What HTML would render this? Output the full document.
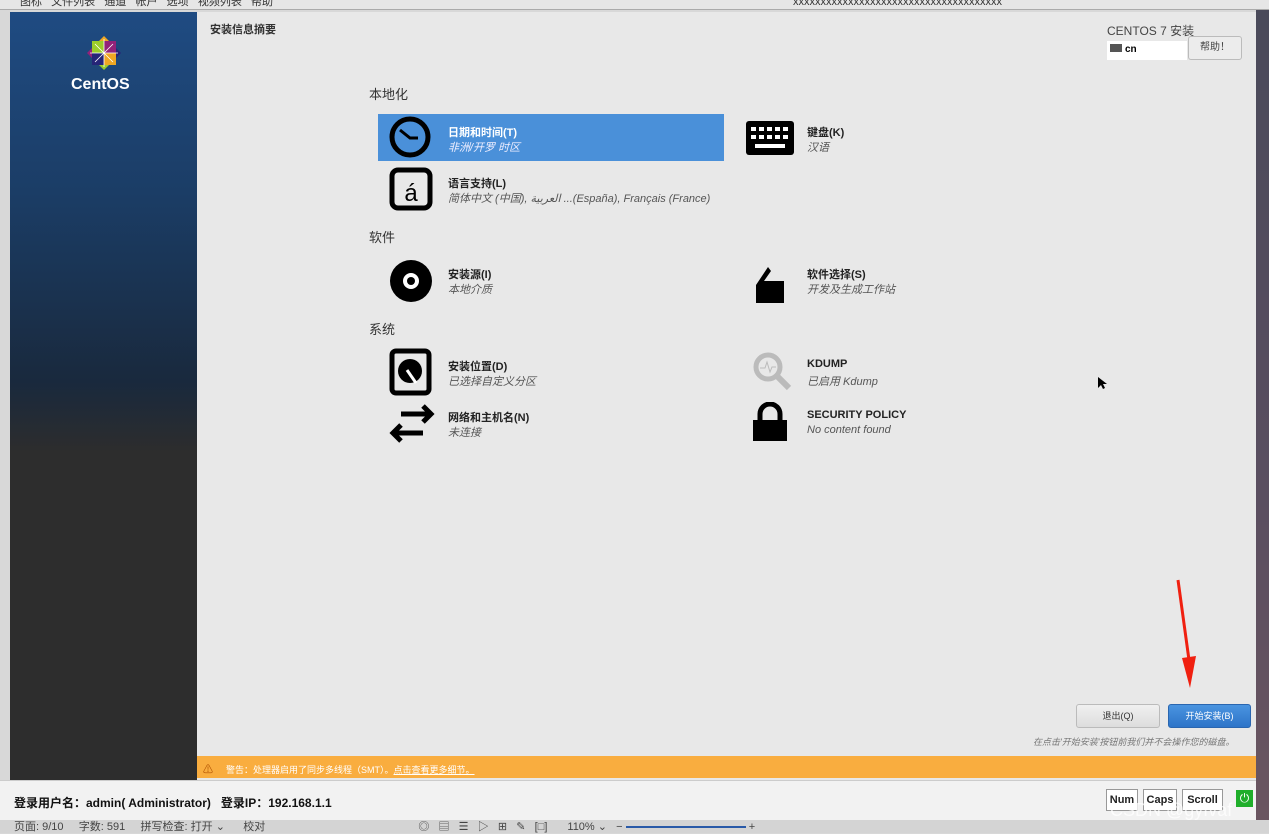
<!DOCTYPE html>
<html><head><meta charset="utf-8"><style>
*{margin:0;padding:0;box-sizing:border-box}
body{width:1269px;height:833px;overflow:hidden;background:#d8d8d8;font-family:"Liberation Sans","Noto Sans CJK SC",sans-serif;position:relative}
.a{position:absolute}
.t{font-size:11px;color:#222;font-weight:bold}
.s{font-size:11px;color:#555;font-style:italic}
.h{font-size:13px;color:#333}
</style></head><body>
<div class="a" style="left:0;top:0;width:1269px;height:10px;background:#e6e6e6;border-bottom:1px solid #aaa;overflow:hidden"><div style="font-size:11px;line-height:4px;color:#333;padding-left:20px;white-space:nowrap">图标 &nbsp; 文件列表 &nbsp; 通道 &nbsp; 帐户 &nbsp; 选项 &nbsp; 视频列表 &nbsp; 帮助<span style="margin-left:520px">xxxxxxxxxxxxxxxxxxxxxxxxxxxxxxxxxxxxxx</span></div></div>
<div class="a" style="left:1256px;top:10px;width:13px;height:810px;background:linear-gradient(#4a4a5a,#5a4e60 60%,#6a5560)"></div>
<div class="a" style="left:10px;top:12px;width:187px;height:768px;background:linear-gradient(#1f4b82 0,#1b3d66 180px,#19293d 370px,#2d2d2d 440px,#2d2d2d)"></div>
<svg class="a" style="left:87px;top:36px" width="34" height="34" viewBox="0 0 34 34">
<rect x="5" y="5" width="12" height="12" fill="#9ccd2a"/><rect x="17" y="5" width="12" height="12" fill="#932279"/>
<rect x="5" y="17" width="12" height="12" fill="#262577"/><rect x="17" y="17" width="12" height="12" fill="#efa724"/>
<path d="M17 0L22 5H12Z" fill="#efa724"/><path d="M17 34L12 29H22Z" fill="#9ccd2a"/><path d="M0 17L5 12V22Z" fill="#932279"/><path d="M34 17L29 22V12Z" fill="#262577"/>
<path d="M17 3V31M3 17H31M8 8L26 26M26 8L8 26" stroke="#fff" stroke-width="0.8"/></svg>
<div class="a" style="left:71px;top:76px;color:#fff;font-weight:bold;font-size:16px">CentOS</div>
<div class="a" style="left:197px;top:12px;width:1059px;height:768px;background:#e8e8e8"></div>
<div class="a" style="left:210px;top:21px;font-size:11px;font-weight:bold;color:#333">安装信息摘要</div>
<div class="a" style="left:1107px;top:22px;font-size:12px;color:#444">CENTOS 7 安装</div>
<div class="a" style="left:1107px;top:41px;width:80px;height:19px;background:#fff;font-size:10px;font-weight:bold;padding:3px 0 0 3px"><span style="display:inline-block;width:12px;height:8px;background:#555;margin-right:3px"></span>cn</div>
<div class="a" style="left:1188px;top:36px;width:54px;height:24px;background:#ececec;border:1px solid #bbb;border-radius:3px;font-size:10px;color:#444;text-align:center;line-height:22px">帮助！</div>
<div class="a h" style="left:369px;top:84px">本地化</div>
<div class="a" style="left:378px;top:114px;width:346px;height:47px;background:#4a90d9"></div>
<svg class="a" style="left:388px;top:115px" width="45" height="45"><circle cx="22" cy="22" r="18" fill="none" stroke="#000" stroke-width="5"/><path d="M12 15L22 23H30" stroke="#000" stroke-width="3" fill="none"/></svg>
<div class="a t" style="left:448px;top:124px;color:#fff">日期和时间(T)</div>
<div class="a s" style="left:448px;top:139px;color:#eef">非洲/开罗 时区</div>
<svg class="a" style="left:746px;top:121px" width="48" height="34"><rect width="48" height="34" rx="3" fill="#000"/><g fill="#fff"><rect x="5" y="6" width="5" height="4"/><rect x="13" y="6" width="5" height="4"/><rect x="21" y="6" width="5" height="4"/><rect x="29" y="6" width="5" height="4"/><rect x="37" y="6" width="5" height="4"/><rect x="5" y="14" width="5" height="4"/><rect x="13" y="14" width="5" height="4"/><rect x="21" y="14" width="5" height="4"/><rect x="29" y="14" width="5" height="4"/><rect x="37" y="14" width="5" height="4"/><rect x="9" y="23" width="30" height="4"/></g></svg>
<div class="a t" style="left:807px;top:124px">键盘(K)</div>
<div class="a s" style="left:807px;top:139px">汉语</div>
<svg class="a" style="left:389px;top:167px" width="44" height="44"><rect x="3" y="3" width="38" height="38" rx="6" fill="none" stroke="#000" stroke-width="5"/><text x="22" y="34" font-size="24" text-anchor="middle" font-family="Liberation Sans">á</text></svg>
<div class="a t" style="left:448px;top:175px">语言支持(L)</div>
<div class="a s" style="left:448px;top:190px">简体中文 (中国), العربية ...(España), Français (France)</div>
<div class="a h" style="left:369px;top:227px">软件</div>
<svg class="a" style="left:389px;top:259px" width="44" height="44"><circle cx="22" cy="22" r="21" fill="#000"/><circle cx="22" cy="22" r="8" fill="#fff"/><circle cx="22" cy="22" r="4" fill="#000"/></svg>
<div class="a t" style="left:448px;top:266px">安装源(I)</div>
<div class="a s" style="left:448px;top:281px">本地介质</div>
<svg class="a" style="left:754px;top:265px" width="32" height="39"><path d="M2 20L14 2L17 6L10 16H30V38H2Z" fill="#000"/></svg>
<div class="a t" style="left:807px;top:266px">软件选择(S)</div>
<div class="a s" style="left:807px;top:281px">开发及生成工作站</div>
<div class="a h" style="left:369px;top:319px">系统</div>
<svg class="a" style="left:389px;top:348px" width="44" height="48"><rect x="3" y="3" width="37" height="42" rx="4" fill="none" stroke="#000" stroke-width="5"/><circle cx="21" cy="23" r="12" fill="#000"/><path d="M18 22L27 35" stroke="#fff" stroke-width="3"/></svg>
<div class="a t" style="left:448px;top:358px">安装位置(D)</div>
<div class="a s" style="left:448px;top:373px">已选择自定义分区</div>
<svg class="a" style="left:751px;top:350px" width="42" height="42"><circle cx="17" cy="17" r="12" fill="none" stroke="#bbb" stroke-width="5"/><path d="M25 25L38 38" stroke="#bbb" stroke-width="6"/><path d="M9 18L14 18L16 12L19 22L21 17H25" stroke="#bbb" fill="none"/></svg>
<div class="a t" style="left:807px;top:358px">KDUMP</div>
<div class="a s" style="left:807px;top:373px">已启用 Kdump</div>
<svg class="a" style="left:389px;top:401px" width="46" height="44"><path d="M4 32H34M12 24L4 32L12 40M42 13H12M34 5L42 13L34 21" stroke="#000" stroke-width="5" fill="none"/></svg>
<div class="a t" style="left:448px;top:409px">网络和主机名(N)</div>
<div class="a s" style="left:448px;top:424px">未连接</div>
<svg class="a" style="left:752px;top:402px" width="36" height="39"><path d="M8 18V12A10 10 0 0 1 28 12V18" stroke="#000" stroke-width="5" fill="none"/><rect x="1" y="18" width="34" height="21" fill="#000"/></svg>
<div class="a t" style="left:807px;top:409px">SECURITY POLICY</div>
<div class="a s" style="left:807px;top:424px">No content found</div>
<svg class="a" style="left:1097px;top:376px" width="10" height="14"><path d="M1 1V12L4 9L6 13L8 12L6 8H10Z" fill="#000"/></svg>
<svg class="a" style="left:1170px;top:578px" width="30" height="112"><path d="M8 2L19 82" stroke="#f02010" stroke-width="3"/><path d="M12 80L26 78L20 110Z" fill="#f02010"/></svg>
<div class="a" style="left:1076px;top:704px;width:84px;height:24px;background:linear-gradient(#f0f0f0,#ddd);border:1px solid #bbb;border-radius:3px;font-size:9px;color:#333;text-align:center;line-height:22px">退出(Q)</div>
<div class="a" style="left:1168px;top:704px;width:83px;height:24px;background:linear-gradient(#4a94e0,#2d74c8);border:1px solid #2a66b0;border-radius:3px;font-size:9px;color:#fff;text-align:center;line-height:22px">开始安装(B)</div>
<div class="a" style="left:1033px;top:735px;font-size:9px;color:#777;font-style:italic">在点击'开始安装'按钮前我们并不会操作您的磁盘。</div>
<div class="a" style="left:197px;top:756px;width:1059px;height:22px;background:#f9ad3f"></div>
<div class="a" style="left:203px;top:761px;font-size:10px;color:#b05000">⚠</div>
<div class="a" style="left:226px;top:763px;font-size:9px;color:#fff">警告：处理器启用了同步多线程（SMT）。<u>点击查看更多细节。</u></div>
<div class="a" style="left:0;top:780px;width:1256px;height:40px;background:#f2f2f2;border-top:1px solid #ccc"></div>
<div class="a" style="left:14px;top:794px;font-size:12px;color:#111;font-weight:bold">登录用户名：admin( Administrator)&nbsp;&nbsp; 登录IP：192.168.1.1</div>
<div class="a" style="left:1106px;top:789px;width:32px;height:22px;border:1px solid #999;background:#fff;font-size:11px;font-weight:bold;text-align:center;line-height:20px;color:#222">Num</div>
<div class="a" style="left:1143px;top:789px;width:34px;height:22px;border:1px solid #999;background:#fff;font-size:11px;font-weight:bold;text-align:center;line-height:20px;color:#222">Caps</div>
<div class="a" style="left:1182px;top:789px;width:41px;height:22px;border:1px solid #999;background:#fff;font-size:11px;font-weight:bold;text-align:center;line-height:20px;color:#222">Scroll</div>
<div class="a" style="left:1236px;top:790px;width:17px;height:17px;background:#1fae2a;color:#fff;font-size:12px;text-align:center;line-height:17px">⏻</div>
<div class="a" style="left:0;top:820px;width:1269px;height:13px;background:#d4d4d4;font-size:11px;color:#444;white-space:nowrap;line-height:14px;padding-left:14px">页面: 9/10 &nbsp;&nbsp;&nbsp; 字数: 591 &nbsp;&nbsp;&nbsp; 拼写检查: 打开 ⌄ &nbsp;&nbsp;&nbsp;&nbsp; 校对 <span style="margin-left:150px">◎ &nbsp; ▤ &nbsp; ☰ &nbsp; ▷ &nbsp; ⊞ &nbsp; ✎ &nbsp; [□]</span><span style="margin-left:20px">110% ⌄ &nbsp; − <span style="display:inline-block;width:120px;height:2px;background:#2a5aa8;vertical-align:middle"></span> +</span></div>
<div class="a" style="left:1110px;top:800px;font-size:18px;color:rgba(255,255,255,0.75)">CSDN @gyfvaf</div>
</body></html>
